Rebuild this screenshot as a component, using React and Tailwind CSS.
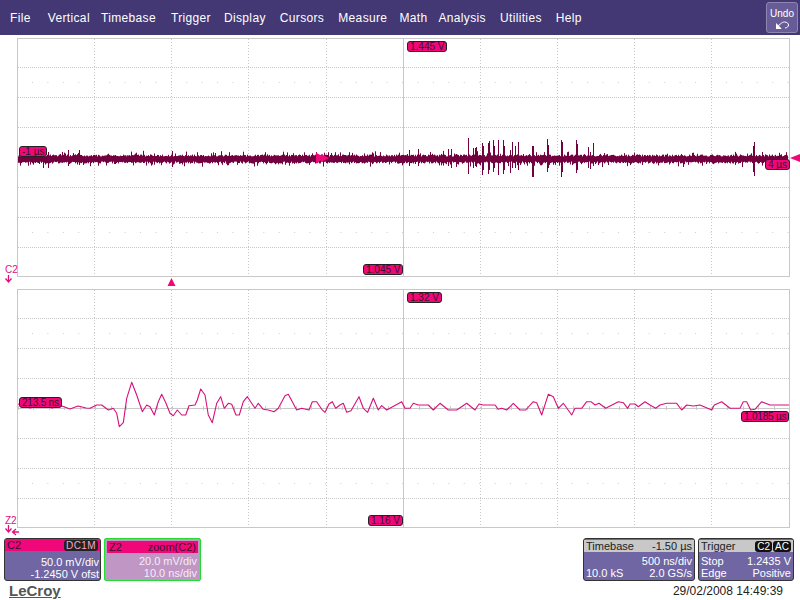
const menus = [
    ['File', 'mr-[3px]'],
    ['Vertical', '-mr-[3px]'],
    ['Timebase', 'mr-[1px]'],
    ['Trigger', '-mr-[1px]'],
    ['Display', ''],
    ['Cursors', ''],
    ['Measure', '-mr-[2px]'],
    ['Math', '-mr-[3px]'],
    ['Analysis', ''],
    ['Utilities', ''],
    ['Help', ''],
];

// small seeded random so the noise is the same every render
function makeRandom(seed) {
    let s = seed;
    return () => {
        s = (s * 16807) % 2147483647;
        return s / 2147483647;
    };
}

// x, top, bottom of the tall spikes in the upper trace
const spikes = [
    [43, 154, 168], [48, 152, 168], [68, 150, 166], [79, 150, 165], [172, 151, 167], [409, 150, 166], [418, 149, 166],
    [448, 149, 166], [451, 149, 168], [456, 154, 167], [468, 138, 174], [473, 148, 168], [475, 148, 166], [476, 147, 167],
    [482, 143, 175], [483, 146, 170], [488, 143, 174], [489, 141, 170], [493, 140, 172], [494, 146, 168], [498, 140, 175],
    [503, 140, 174], [504, 146, 170], [510, 150, 173], [512, 142, 168], [515, 146, 168], [518, 142, 170], [532, 146, 177],
    [533, 146, 177], [547, 139, 172], [548, 145, 168], [561, 140, 177], [562, 142, 172], [576, 140, 173], [577, 144, 170],
    [588, 147, 168], [590, 152, 169], [593, 143, 166], [753, 146, 172], [754, 142, 176],
];

function topTrace() {
    const rand = makeRandom(4711);
    let d = '';
    for (let x = 18; x < 788; x += 1) {
        const up = 156.5 - rand() * 2 - (rand() > 0.8 ? rand() * 4 : 0);
        const down = 161.5 + rand() * 2 + (rand() > 0.8 ? rand() * 4 : 0);
        d += `M${x + 0.5} ${up.toFixed(1)}V${down.toFixed(1)}`;
    }
    spikes.forEach(([x, a, b]) => {
        d += `M${x + 0.5} ${a}V${b}`;
    });
    return d;
}

const startPoints = [
    [18, 404], [30, 408], [42, 405], [52, 408], [62, 406], [70, 409], [78, 406], [86, 408],
];
// read off a 3x crop with its origin at 90,375
const leftPoints = [
    [0, 100], [20, 90], [35, 90], [55, 105], [70, 100], [80, 115], [88, 155], [100, 143], [110, 70], [125, 22], [140, 60], [157, 110],
    [170, 90], [180, 95], [193, 120], [205, 80], [215, 58], [228, 85], [240, 115], [250, 122], [262, 105], [275, 120], [287, 120],
    [297, 92], [315, 90], [322, 75], [332, 42], [345, 60], [355, 120], [367, 143], [380, 85], [392, 65], [403, 100], [415, 85],
    [425, 88], [438, 120], [448, 120], [460, 80], [472, 65], [485, 85], [495, 100], [505, 85], [520, 103], [535, 105], [552, 110],
    [565, 100], [585, 62],
].map(([x, y]) => [90 + x / 3, 375 + y / 3]);
// read off a 3x crop with its origin at 285,380
const rightPoints = [
    [0, 47], [10, 43], [22, 65], [35, 90], [50, 85], [72, 90], [82, 65], [95, 65], [110, 88], [120, 97], [132, 72], [142, 65], [152, 85],
    [165, 75], [175, 70], [185, 97], [198, 92], [222, 50], [235, 85], [248, 97], [265, 55], [280, 90], [290, 77], [305, 90], [350, 65],
    [360, 85], [375, 85], [385, 70], [400, 75], [430, 75], [445, 90], [465, 70], [490, 90], [515, 90], [545, 70], [570, 90], [582, 72],
    [595, 75], [630, 75], [640, 88], [650, 85], [665, 90], [685, 70], [705, 90], [722, 90], [745, 65], [755, 68], [770, 105], [790, 43],
    [805, 50], [820, 85], [835, 70], [860, 105], [870, 85], [890, 85], [905, 65], [918, 65], [930, 75], [942, 70], [962, 85], [1000, 65],
    [1015, 68], [1028, 85], [1035, 72], [1050, 72], [1060, 80], [1080, 65], [1095, 75], [1112, 85], [1125, 75], [1145, 70], [1175, 70],
    [1190, 90], [1205, 75], [1225, 78], [1245, 75], [1280, 90], [1288, 75], [1310, 65], [1335, 85], [1365, 85], [1375, 65], [1385, 65],
    [1397, 90], [1410, 88], [1430, 65], [1455, 75], [1512, 75],
].map(([x, y]) => [285 + x / 3, 380 + y / 3]);

function tickPath() {
    let d = '';
    for (let k = 0; k <= 50; k += 1) {
        const x = Math.round(15.42 * k) + 0.5;
        d += `M${x} 116V120`;
    }
    return d;
}

function Graticule() {
    const cols = [94, 171, 248, 326, 403, 480, 557, 634, 711];
    const rows = [28, 58, 88, 118, 148, 178, 208];
    return (
        <g>
            {cols.map((x) => (
                <line key={x} x1={x - 17.5} x2={x - 17.5} y1="0" y2="237" stroke="#c8c8c8" strokeDasharray={x === 403 ? undefined : '1 2'} />
            ))}
            {rows.map((y) => (
                <line key={y} x1="0" x2="771" y1={y + 0.5} y2={y + 0.5} stroke="#c8c8c8" strokeDasharray={y === 118 ? undefined : '1 1'} />
            ))}
            <path d={tickPath()} stroke="#c8c8c8" />
            {[43, 193].map((y) => (
                <line key={y} x1="14" x2="771" y1={y + 0.5} y2={y + 0.5} stroke="#cfcfcf" strokeDasharray="1 14.42" />
            ))}
        </g>
    );
}

function Tag({ className, children }) {
    return (
        <div className={`absolute h-[11px] rounded-[3px] border border-[#222] bg-[#f0087a] px-[2px] text-[10px] leading-[9px] text-[#3a1028] whitespace-nowrap ${className}`}>
            {children}
        </div>
    );
}

function ScopePanel({ className, children }) {
    return <div className={`relative ml-[17px] h-[239px] w-[773px] border border-[#c8c8c8] ${className}`}>{children}</div>;
}

function Row({ left, right, className }) {
    return (
        <div className={`flex h-[12px] items-center justify-between px-[2px] leading-[12px] ${className}`}>
            <span>{left}</span>
            <span>{right}</span>
        </div>
    );
}

function Box({ className, children }) {
    return <div className={`flex h-[43px] flex-col rounded-[3px] border border-[#333] bg-[#6f66a3] text-[11px] text-white ${className}`}>{children}</div>;
}

export default function App() {
    const zoomLine = [...startPoints, ...leftPoints, ...rightPoints].map(([x, y]) => `${(x - 18).toFixed(1)},${(y - 290).toFixed(1)}`).join(' ');

    return (
        <div className="relative flex h-[600px] w-[800px] flex-col overflow-hidden bg-white font-['Liberation_Sans',Arial,sans-serif]">
            <div className="flex h-[35px] items-center justify-between bg-[#433874] pl-[10px] pr-[2px] text-[12px] text-white">
                <div className="flex gap-[14px] leading-[14px] tracking-[0.35px]">
                    {menus.map(([name, margin]) => (
                        <span key={name} className={margin}>{name}</span>
                    ))}
                </div>
                <div className="flex h-[31px] w-[32px] flex-col items-center rounded-[3px] border border-[#8d86b0] bg-[#675c97] pt-[5px] text-[10px] leading-[11px] text-white">
                    <span>Undo</span>
                    <svg width="13" height="8" viewBox="0 0 13 8" fill="none" stroke="white" strokeWidth="1" className="mt-[2px]">
                        <path d="M0 7.5V2.5L5 7.5Z" fill="white" />
                        <path d="M2 5L5 2.5C6 1.5 7 1 8.5 1C11 1 12.5 2.5 12.5 4C12.5 5.5 11 7 9 7" />
                    </svg>
                </div>
            </div>

            <ScopePanel className="mt-[3px]">
                <svg width="771" height="237" className="absolute left-0 top-0" fill="none">
                    <Graticule />
                    <g transform="translate(-18 -39)">
                        <path d={topTrace()} stroke="#73003f" strokeWidth="1" />
                    </g>
                    <path d="M298 113.5L307 119L298 124.5Z" fill="#f0087a" />
                    <path d="M311 119L303 115V123Z" fill="#f0087a" />
                </svg>
                <Tag className="left-[1px] top-[107px]">-1 µs</Tag>
                <Tag className="left-[747px] top-[120px]">4 µs</Tag>
                <Tag className="left-[389px] top-[2px]">1.445 V</Tag>
                <Tag className="left-[345px] top-[225px]">1.045 V</Tag>
            </ScopePanel>

            <ScopePanel className="mt-[12px]">
                <svg width="771" height="237" className="absolute left-0 top-0" fill="none">
                    <Graticule />
                    <polyline points={zoomLine} stroke="#d8107a" strokeWidth="1.1" strokeLinejoin="round" />
                </svg>
                <Tag className="left-[1px] top-[107px] tracking-[-0.2px]">213.5 ns</Tag>
                <Tag className="left-[723px] top-[121px] tracking-[-0.2px]">1.0185 µs</Tag>
                <Tag className="left-[389px] top-[2px]">1.32 V</Tag>
                <Tag className="left-[350px] top-[225px]">1.16 V</Tag>
            </ScopePanel>

            {/* markers that sit outside the grids */}
            <div className="absolute left-[5px] top-[265px] text-[10px] leading-[10px] text-[#e0107a]">C2</div>
            <svg className="absolute left-[4px] top-[275px]" width="12" height="9" fill="none" stroke="#e0107a" strokeWidth="1.3">
                <path d="M4.5 0v7M1.5 3.5l3 3.5 3-3.5" />
            </svg>
            <div className="absolute left-[5px] top-[516px] text-[10px] leading-[10px] text-[#e0107a]">Z2</div>
            <svg className="absolute left-[4px] top-[525px]" width="16" height="11" fill="none" stroke="#e0107a" strokeWidth="1.3">
                <path d="M4.5 0v7M1.5 3.5l3 3.5 3-3.5" />
                <path d="M15 7H8.5M12 4L8.5 7l3.5 3" />
            </svg>
            <svg className="absolute left-[167px] top-[278px]" width="9" height="8" fill="#f0087a">
                <path d="M4.5 0L8.5 8H0.5z" />
            </svg>
            <svg className="absolute left-[790px] top-[153px]" width="10" height="10" fill="#f0087a">
                <path d="M0 5l10-4v8z" />
            </svg>

            <div className="mt-[10px] flex gap-[3px] pl-[4px] pr-[6px]">
                <Box className="w-[97px]">
                    <Row
                        className="h-[11px] rounded-t-[2px] bg-[#f0087a] text-[#3a1028]"
                        left="C2"
                        right={<span className="rounded-[3px] bg-[#222] px-[2px] text-[10px] tracking-[0.4px] text-[#f7a6cd]">DC1M</span>}
                    />
                    <div className="mt-[5px] pr-[1px] text-right leading-[12px]">
                        <div>50.0 mV/div</div>
                        <div>-1.2450 V ofst</div>
                    </div>
                </Box>

                <div className="flex h-[43px] w-[97px] flex-col rounded-[2px] border border-[#22dd33] bg-[#c096c4] p-[2px] text-[11px] text-[#f4ecf6]">
                    <Row className="bg-[#f0087a] text-[#3a1028]" left="Z2" right="zoom(C2)" />
                    <div className="mt-[2px] pr-[1px] text-right leading-[12px]">
                        <div>20.0 mV/div</div>
                        <div>10.0 ns/div</div>
                    </div>
                </div>

                <Box className="ml-auto w-[112px]">
                    <Row className="mt-[1px] bg-[#c8c8c8] text-[#222]" left="Timebase" right="-1.50 µs" />
                    <div className="mt-[3px] pr-[2px] text-right leading-[12px]">500 ns/div</div>
                    <Row left="10.0 kS" right="2.0 GS/s" />
                </Box>

                <Box className="w-[96px]">
                    <Row
                        className="mt-[1px] bg-[#c8c8c8] text-[#222]"
                        left="Trigger"
                        right={
                            <span className="flex gap-[1px] text-[10px] text-white">
                                <span className="rounded-[3px] bg-[#111] px-[2px] leading-[11px]">C2</span>
                                <span className="rounded-[3px] bg-[#111] px-[2px] leading-[11px]">AC</span>
                            </span>
                        }
                    />
                    <Row className="mt-[3px]" left="Stop" right="1.2435 V" />
                    <Row left="Edge" right="Positive" />
                </Box>
            </div>

            <div className="flex flex-1 items-center justify-between pl-[9px] pr-[17px]">
                <span className="text-[15px] font-bold leading-[17px] text-[#555] underline">LeCroy</span>
                <span className="text-[12px] leading-[12px] text-[#222]">29/02/2008 14:49:39</span>
            </div>
        </div>
    );
}
